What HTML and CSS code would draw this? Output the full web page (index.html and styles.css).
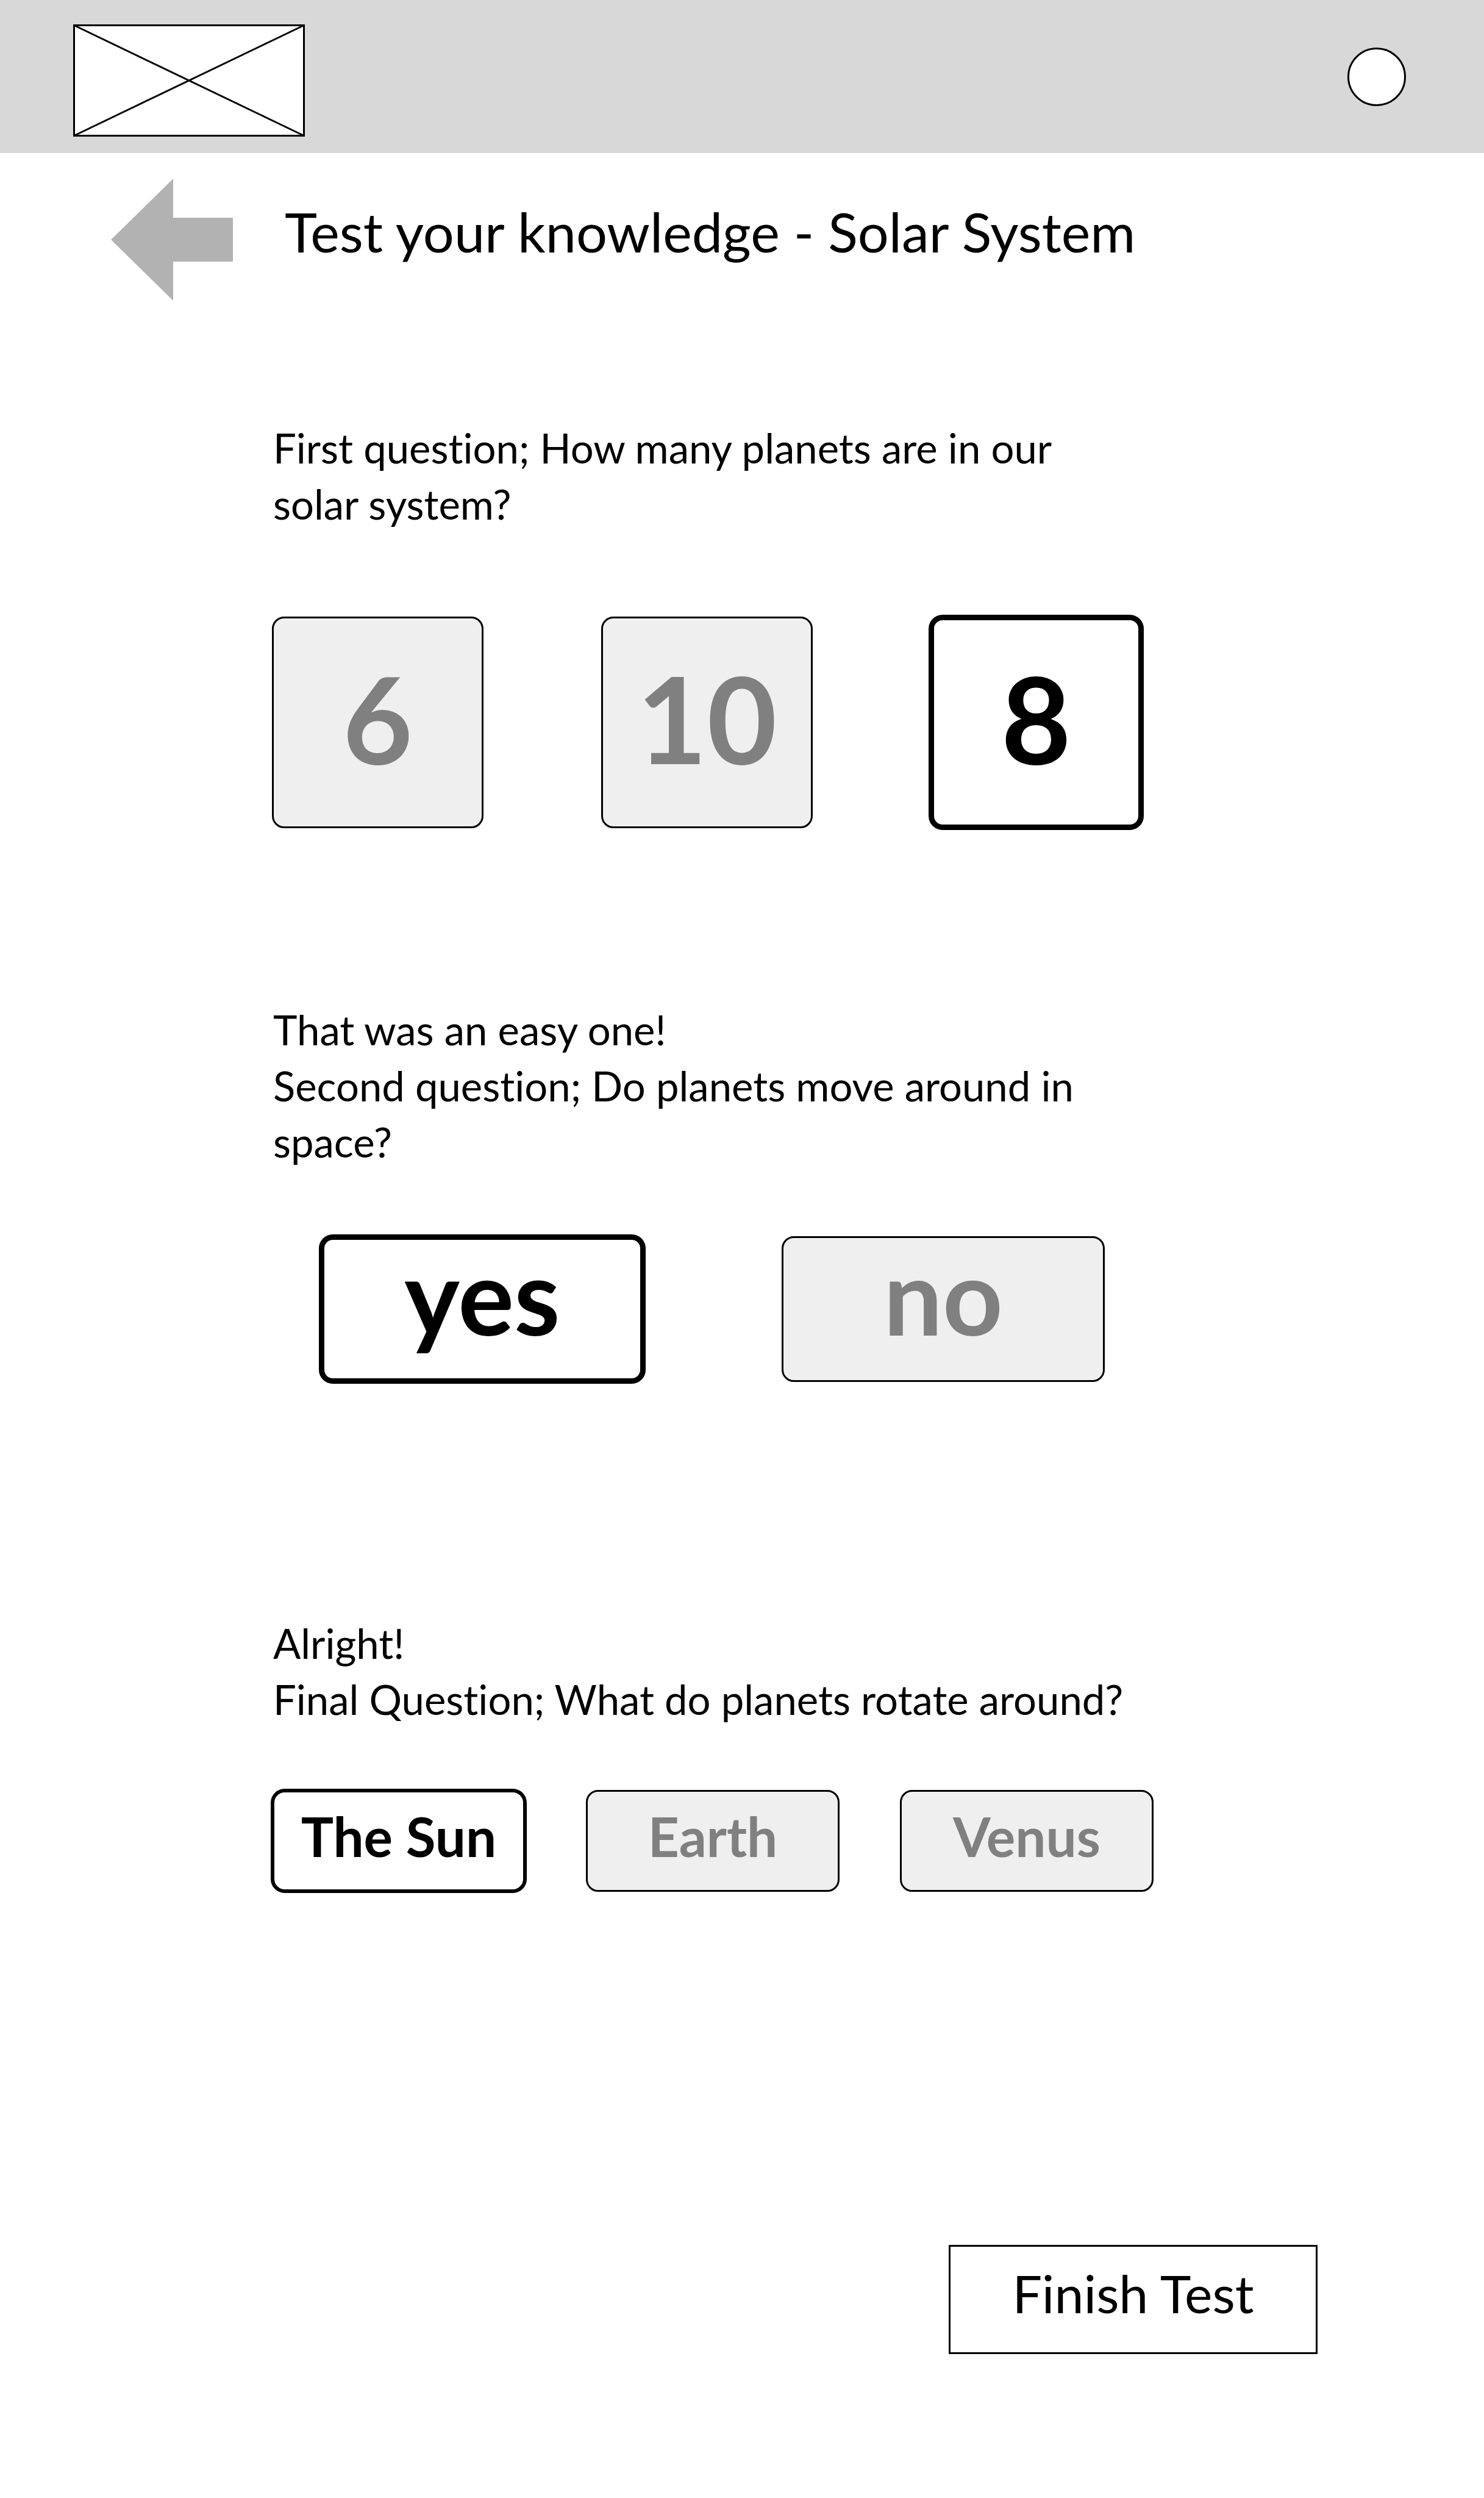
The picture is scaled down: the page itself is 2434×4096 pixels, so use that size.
FILE: index.html
```
<!DOCTYPE html>
<html lang="en">
<head>
  <meta charset="utf-8">
  <meta name="viewport" content="width=device-width, initial-scale=1">
  <title>Test your knowledge - Solar System</title>
  <link rel="stylesheet" href="styles.css">
</head>
<body>
  <header class="topbar">
    <a class="logo" href="#" aria-label="Home">
      <svg class="logo-box" viewBox="0 0 380 184" aria-hidden="true">
        <rect x="1.5" y="1.5" width="377" height="181"/>
        <path d="M1.5 1.5 378.5 182.5M1.5 182.5 378.5 1.5"/>
      </svg>
    </a>
    <button class="profile" type="button" aria-label="Profile"></button>
  </header>

  <main class="page">
    <div class="title-row">
      <a class="back" href="#" aria-label="Back">
        <svg class="back-arrow" viewBox="0 0 200 200" aria-hidden="true">
          <path d="M0 100 102 0V64H200V136H102V200Z"/>
        </svg>
      </a>
      <h1 class="title">Test your knowledge - Solar System</h1>
    </div>

    <section class="question">
      <p class="prompt">First question; How many planets are in our solar system?</p>
      <div class="answers answers-number">
        <button class="answer" type="button" aria-pressed="false">6</button>
        <button class="answer" type="button" aria-pressed="false">10</button>
        <button class="answer selected" type="button" aria-pressed="true">8</button>
      </div>
    </section>

    <section class="question">
      <p class="prompt">That was an easy one!<br>Second question; Do planets move around in space?</p>
      <div class="answers answers-yesno">
        <button class="answer selected" type="button" aria-pressed="true">yes</button>
        <button class="answer" type="button" aria-pressed="false">no</button>
      </div>
    </section>

    <section class="question">
      <p class="prompt">Alright!<br>Final Question; What do planets rotate around?</p>
      <div class="answers answers-word">
        <button class="answer selected" type="button" aria-pressed="true">The Sun</button>
        <button class="answer" type="button" aria-pressed="false">Earth</button>
        <button class="answer" type="button" aria-pressed="false">Venus</button>
      </div>
    </section>

    <div class="actions">
      <button class="finish" type="button">Finish Test</button>
    </div>
  </main>
</body>
</html>
```
FILE: styles.css
```
* {
  box-sizing: border-box;
}

body {
  margin: 0;
  background: #fff;
  color: #000;
  font-family: Lato, "Open Sans", sans-serif;
  font-variant-ligatures: none;
}

button {
  font-family: inherit;
  cursor: pointer;
}

/* Top bar */
.topbar {
  display: flex;
  align-items: center;
  justify-content: space-between;
  padding: 40px 128px 27px 120px;
  background: #d8d8d8;
}

.logo,
.logo-box,
.back,
.back-arrow {
  display: block;
}

.logo-box {
  width: 380px;
  height: 184px;
  fill: #fff;
  stroke: #000;
  stroke-width: 3px;
}

.profile {
  width: 96px;
  height: 96px;
  margin-bottom: 12px;
  padding: 0;
  border: 3px solid #000;
  border-radius: 50%;
  background: #fff;
}

/* Title */
.page {
  padding: 42px 273px 237px 182px;
}

.title-row {
  display: flex;
  align-items: center;
  gap: 85px;
  margin-bottom: 195px;
}

.back-arrow {
  width: 200px;
  height: 200px;
  fill: #b2b2b2;
}

.title {
  margin: 0;
  padding-bottom: 28px;
  font-size: 90px;
  font-weight: 400;
  line-height: 120px;
}

/* Questions */
.question {
  margin-left: 264px;
}

.question:nth-of-type(1) {
  margin-bottom: 284px;
}

.question:nth-of-type(2) {
  margin-bottom: 382px;
}

.question:nth-of-type(3) {
  margin-bottom: 579px;
}

.prompt {
  max-width: 1420px;
  margin: 0;
  padding-left: 2px;
  font-size: 67px;
  line-height: 92px;
}

.answers {
  display: grid;
  font-weight: 700;
}

.answer {
  border: 3px solid #000;
  border-radius: 20px;
  background: #efefef;
  color: #808080;
  font-size: inherit;
  font-weight: inherit;
  line-height: 1;
}

.selected {
  margin: -3px;
  border-width: 9px;
  border-radius: 23px;
  background: #fff;
  color: #000;
}

.answers-number {
  grid-template-columns: repeat(3, 1fr);
  grid-auto-rows: 347px;
  gap: 193px;
  max-width: 1427px;
  margin-top: 139px;
  font-size: 198px;
}

.answers-number .answer {
  padding: 0 0 16px;
}

.answers-yesno {
  grid-template-columns: repeat(2, 1fr);
  grid-auto-rows: 239px;
  gap: 226px;
  max-width: 1366px;
  margin-top: 109px;
  padding-left: 80px;
  font-size: 172px;
}

.answers-yesno .answer {
  padding: 0 0 46px;
}

.answers-word {
  grid-template-columns: repeat(3, 1fr);
  grid-auto-rows: 167px;
  gap: 99px;
  max-width: 1446px;
  margin-top: 103px;
  font-size: 89px;
}

.answers-word .answer {
  padding: 0 0 16px;
}

.answers-word .selected {
  margin: -2px;
  border-width: 6px;
}

/* Finish */
.actions {
  display: flex;
  justify-content: flex-end;
}

.finish {
  width: 605px;
  height: 179px;
  padding: 0 0 22px;
  border: 3px solid #000;
  background: #fff;
  color: #000;
  font-size: 86px;
  line-height: 1;
}
```
